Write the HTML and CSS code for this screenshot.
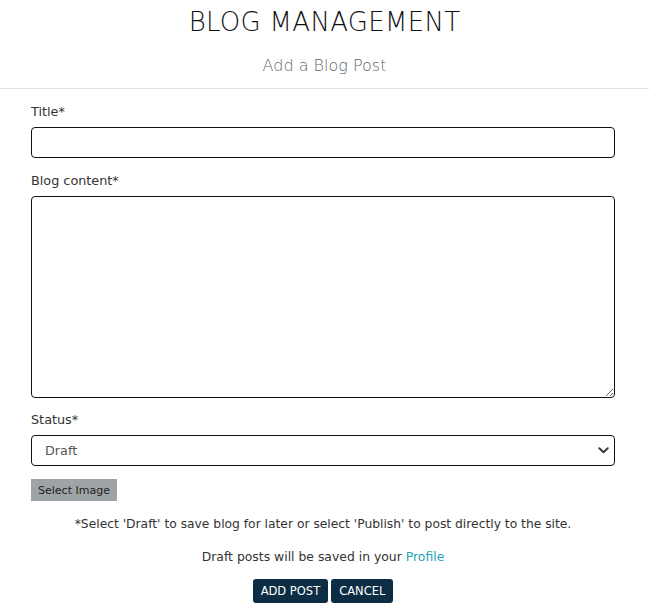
FILE: index.html
```html
<!DOCTYPE html>
<html>
<head>
<meta charset="utf-8">
<link rel="stylesheet" href="styles.css">
</head>
<body>
<header class="page-header">
  <h1 class="page-title">BLOG MANAGEMENT</h1>
  <h2 class="page-subtitle">Add a Blog Post</h2>
</header>
<main class="container">
  <form class="blog-form">
    <div class="field field-first">
      <label class="field-label">Title*</label>
      <input class="field-input" type="text">
    </div>
    <div class="field">
      <label class="field-label">Blog content*</label>
      <textarea class="field-textarea"></textarea>
    </div>
    <div class="field">
      <label class="field-label">Status*</label>
      <div class="select-wrap">
        <select class="field-select"><option>Draft</option><option>Publish</option></select>
        <svg class="chev" width="11" height="7" viewBox="0 0 11 7"><path d="M1.3 1.3 L5.5 5.3 L9.7 1.3" fill="none" stroke="#343a40" stroke-width="2" stroke-linecap="round" stroke-linejoin="round"/></svg>
      </div>
    </div>
    <button type="button" class="btn-image">Select Image</button>
    <p class="note">*Select 'Draft' to save blog for later or select 'Publish' to post directly to the site.</p>
    <p class="note note-2">Draft posts will be saved in your <a class="link" href="#">Profile</a></p>
    <div class="actions">
      <button type="button" class="btn-dark">ADD POST</button>
      <button type="button" class="btn-dark">CANCEL</button>
    </div>
  </form>
</main>
</body>
</html>
```
FILE: styles.css
```css
* { box-sizing: border-box; }
html, body { margin: 0; padding: 0; background: #fff; }
body {
  font-family: "DejaVu Sans", "Open Sans", sans-serif;
  color: #333;
}
.page-header {
  text-align: center;
  border-bottom: 1px solid #e2e2e2;
  padding-top: 7px;
  height: 89px;
}
.page-title {
  margin: 0;
  font-weight: 300;
  font-size: 26px;
  line-height: 30px;
  color: #111;
  letter-spacing: 0.3px;
}
.page-subtitle {
  margin: 18px 0 0;
  font-weight: 300;
  font-size: 16px;
  line-height: 22px;
  color: #5f666d;
}
.container {
  padding: 0 34px 0 31px;
}
.blog-form {
  display: flex;
  flex-direction: column;
  padding-top: 14px;
}
.field {
  display: flex;
  flex-direction: column;
  margin-bottom: 13px;
}
.field-first { margin-bottom: 14px; }
.field-label {
  font-size: 12.8px;
  line-height: 17px;
  margin-bottom: 7px;
  color: #333;
}
.field-input {
  height: 31px;
  border: 1px solid #111;
  border-radius: 4px;
  font: inherit;
  padding: 0 12px;
}
.field-textarea {
  height: 202px;
  border: 1px solid #111;
  border-radius: 4px;
  font: inherit;
  resize: vertical;
}
.select-wrap { position: relative; }
.field-select {
  width: 100%;
  height: 31px;
  border: 1px solid #111;
  border-radius: 4px;
  background: #fff;
  font-family: inherit;
  font-size: 12.8px;
  color: #555;
  padding: 0 13px;
  appearance: none;
  -webkit-appearance: none;
}
.chev { position: absolute; right: 6px; top: 12px; }
.btn-image {
  align-self: flex-start;
  height: 22px;
  width: 86px;
  padding: 0;
  border: 0;
  background: #9ea3a6;
  color: #222;
  font-family: inherit;
  font-size: 11px;
}
.note {
  margin: 15px 0 0;
  text-align: center;
  font-size: 12.3px;
  line-height: 17px;
  color: #333;
}
.note-2 { margin-top: 15px; font-size: 12.4px; }
.link { color: #27a2b8; text-decoration: none; }
.actions {
  display: flex;
  justify-content: center;
  gap: 3px;
  margin-top: 14px;
}
.btn-dark {
  height: 24px;
  padding: 0 8px;
  border: 0;
  border-radius: 3px;
  background: #0c2d44;
  color: #fff;
  font-family: inherit;
  font-size: 11.5px;
}
```
